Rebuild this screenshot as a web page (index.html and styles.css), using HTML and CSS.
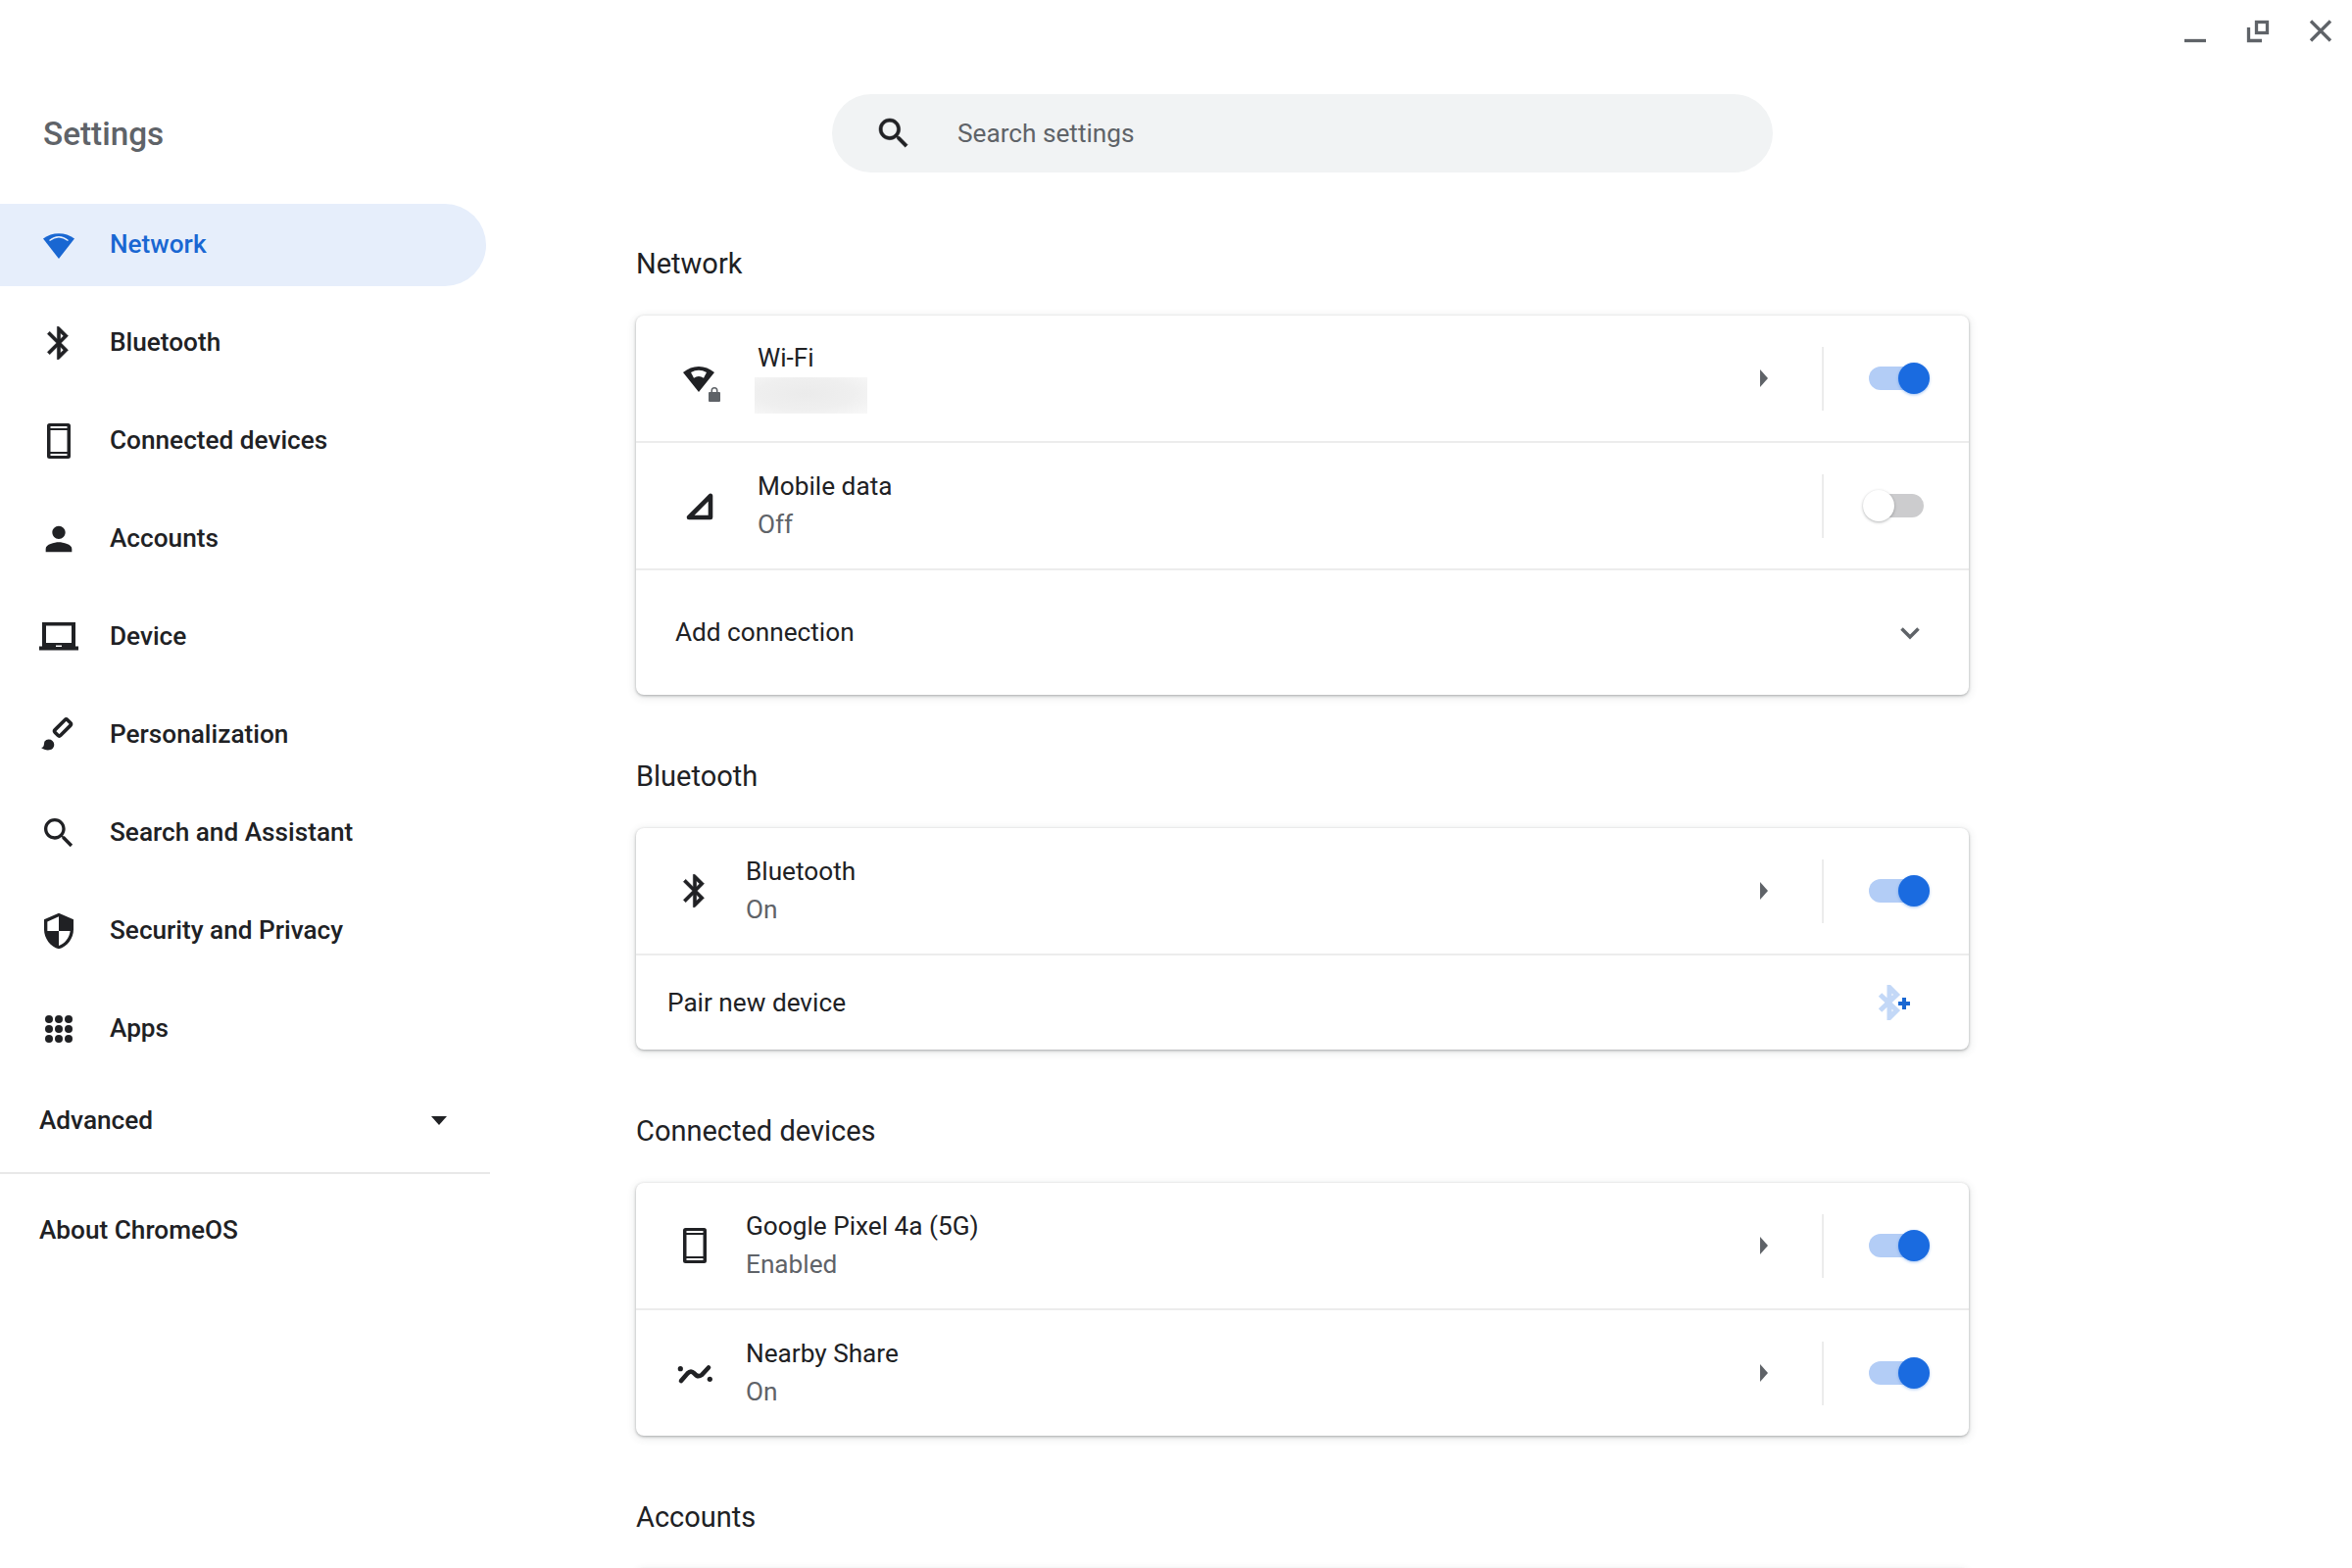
FILE: index.html
```html
<!DOCTYPE html>
<html lang="en">
<head>
<meta charset="utf-8">
<title>Settings</title>
<link rel="stylesheet" href="styles.css">
</head>
<body>
<div class="window-controls">
  <svg class="win-icon" viewBox="0 0 30 30"><path d="M4 25.5H26"/></svg>
  <svg class="win-icon" viewBox="0 0 30 30"><rect x="13.5" y="6.5" width="11" height="11"/><path d="M5.5 12V25.5H19"/></svg>
  <svg class="win-icon" viewBox="0 0 30 30"><path d="M5 5.500L25 25.500M25 5.500L5 25.500"/></svg>
</div>
<div class="app">
  <aside class="sidebar">
    <h1 class="app-title">Settings</h1>
    <nav class="nav">
      <a class="nav-item nav-item--active">
        <svg class="icon" viewBox="0 0 40 40"><path d="M4 13.500C9 10 14 8.300 20 8.300S31 10 36 13.500L20 34Z"/><path class="wifi-gap" d="M10.500 15.500Q20 8 29.500 15.500"/></svg>
        <span>Network</span>
      </a>
      <a class="nav-item">
        <svg class="icon icon--bold" viewBox="0 0 24 24"><path d="M17.71 7.71L12 2h-1v7.59L6.41 5 5 6.41 10.59 12 5 17.59 6.41 19 11 14.41V22h1l5.71-5.71-4.3-4.29 4.3-4.29zM13 5.83l1.88 1.88L13 9.59V5.83zm1.88 10.46L13 18.17v-3.76l1.88 1.88z"/></svg>
        <span>Bluetooth</span>
      </a>
      <a class="nav-item">
        <svg class="icon" viewBox="0 0 40 40"><path fill-rule="evenodd" d="M10.500 2h19A2.500 2.500 0 0 1 32 4.500v31a2.500 2.500 0 0 1-2.500 2.500h-19A2.500 2.500 0 0 1 8 35.500v-31A2.500 2.500 0 0 1 10.500 2zM11.500 7h17v-2h-17zM11.500 33v2h17v-2zM11.500 9v22h17v-22z"/></svg>
        <span>Connected devices</span>
      </a>
      <a class="nav-item">
        <svg class="icon" viewBox="0 0 24 24"><path d="M12 12c2.210 0 4-1.790 4-4s-1.790-4-4-4-4 1.790-4 4 1.790 4 4 4zm0 2c-2.670 0-8 1.340-8 4v2h16v-2c0-2.660-5.330-4-8-4z"/></svg>
        <span>Accounts</span>
      </a>
      <a class="nav-item">
        <svg class="icon" viewBox="0 0 40 40"><path fill-rule="evenodd" d="M3 5H37V29.500H40V33.500H0V29.500H3ZM7 8.500V26H33V8.500ZM17 28.500V30H23V28.500Z"/></svg>
        <span>Device</span>
      </a>
      <a class="nav-item">
        <svg class="icon" viewBox="0 0 40 40"><rect class="brush-handle" x="-4" y="-9" width="8" height="18" rx="2" transform="translate(24 12.500) rotate(45)"/><path d="M2 33c3.500-.5 2.500-3.500 3.500-6.500a5.500 5.500 0 1 1 8 7.500c-3.500 2.500-8 1.500-11.500-1z"/></svg>
        <span>Personalization</span>
      </a>
      <a class="nav-item">
        <svg class="icon" viewBox="0 0 24 24"><path d="M15.500 14h-.790l-.280-.270C15.410 12.590 16 11.110 16 9.500 16 5.910 13.090 3 9.500 3S3 5.910 3 9.500 5.910 16 9.500 16c1.610 0 3.090-.590 4.230-1.570l.270.280v.790l5 4.990L20.490 19l-4.990-5zm-6 0C7.010 14 5 11.990 5 9.500S7.010 5 9.500 5 14 7.010 14 9.500 11.990 14 9.500 14z"/></svg>
        <span>Search and Assistant</span>
      </a>
      <a class="nav-item">
        <svg class="icon" viewBox="0 0 24 24"><path d="M12 1L3 5v6c0 5.550 3.840 10.740 9 12 5.160-1.260 9-6.450 9-12V5l-9-4zm0 10.990h7c-.530 4.120-3.280 7.790-7 8.940V12H5V6.300l7-3.110v8.800z"/></svg>
        <span>Security and Privacy</span>
      </a>
      <a class="nav-item">
        <svg class="icon" viewBox="0 0 40 40"><circle cx="10" cy="10" r="4"/><circle cx="20" cy="10" r="4"/><circle cx="30" cy="10" r="4"/><circle cx="10" cy="20" r="4"/><circle cx="20" cy="20" r="4"/><circle cx="30" cy="20" r="4"/><circle cx="10" cy="30" r="4"/><circle cx="20" cy="30" r="4"/><circle cx="30" cy="30" r="4"/></svg>
        <span>Apps</span>
      </a>
    </nav>
    <div class="advanced">
      <span>Advanced</span>
      <svg class="caret" viewBox="0 0 16 9"><path d="M0 0H16L8 9Z"/></svg>
    </div>
    <a class="about">About ChromeOS</a>
  </aside>

  <main class="main">
    <div class="search">
      <svg class="icon icon--bold" viewBox="0 0 24 24"><path d="M15.500 14h-.790l-.280-.270C15.410 12.590 16 11.110 16 9.500 16 5.910 13.090 3 9.500 3S3 5.910 3 9.500 5.910 16 9.500 16c1.610 0 3.090-.590 4.230-1.570l.270.280v.790l5 4.990L20.490 19l-4.990-5zm-6 0C7.010 14 5 11.990 5 9.500S7.010 5 9.500 5 14 7.010 14 9.500 11.990 14 9.500 14z"/></svg>
      <span>Search settings</span>
    </div>

    <section class="section">
      <h2 class="section-title">Network</h2>
      <div class="card">
        <div class="row row--tall row--network">
          <div class="row-icon">
            <svg class="icon" viewBox="0 0 40 40"><path fill-rule="evenodd" d="M4 14C9 10 14 8 20 8S31 10 36 14L20 34ZM12 14L15 19.700Q20 16.500 25 19.700L28 14Q20 9.500 12 14Z"/></svg>
            <svg class="lock" viewBox="0 0 12 15"><path fill-rule="evenodd" d="M2.500 5V3.500a3.500 3.500 0 0 1 7 0V5H11a1 1 0 0 1 1 1v8a1 1 0 0 1-1 1H1a1 1 0 0 1-1-1V6a1 1 0 0 1 1-1zM4 5h4V3.500a2 2 0 0 0-4 0z"/></svg>
          </div>
          <div class="row-text row-text--tight">
            <div class="row-label">Wi-Fi</div>
            <div class="redacted"></div>
          </div>
          <svg class="arrow" viewBox="0 0 8 18"><path d="M0 0L8 9L0 18Z"/></svg>
          <div class="vr"></div>
          <div class="toggle toggle--on"><span class="toggle-track"></span><span class="toggle-knob"></span></div>
        </div>
        <div class="row row--tall row--network">
          <div class="row-icon">
            <svg class="icon" viewBox="0 0 40 40"><path class="tri" d="M32 10V32H10Z"/></svg>
          </div>
          <div class="row-text">
            <div class="row-label">Mobile data</div>
            <div class="row-sub">Off</div>
          </div>
          <div class="vr"></div>
          <div class="toggle"><span class="toggle-track"></span><span class="toggle-knob"></span></div>
        </div>
        <div class="row row--add">
          <div class="row-label row-label--grow">Add connection</div>
          <svg class="chevron" viewBox="0 0 24 24"><path d="M3.500 7.500L12 16L20.500 7.500"/></svg>
        </div>
      </div>
    </section>

    <section class="section">
      <h2 class="section-title">Bluetooth</h2>
      <div class="card">
        <div class="row row--tall">
          <div class="row-icon">
            <svg class="icon icon--bold" viewBox="0 0 24 24"><path d="M17.710 7.710L12 2h-1v7.590L6.410 5 5 6.410 10.590 12 5 17.590 6.410 19 11 14.410V22h1l5.710-5.710-4.300-4.290 4.300-4.290zM13 5.830l1.880 1.880L13 9.590V5.830zm1.880 10.460L13 18.170v-3.760l1.880 1.880z"/></svg>
          </div>
          <div class="row-text">
            <div class="row-label">Bluetooth</div>
            <div class="row-sub">On</div>
          </div>
          <svg class="arrow" viewBox="0 0 8 18"><path d="M0 0L8 9L0 18Z"/></svg>
          <div class="vr"></div>
          <div class="toggle toggle--on"><span class="toggle-track"></span><span class="toggle-knob"></span></div>
        </div>
        <div class="row row--pair">
          <div class="row-label row-label--grow">Pair new device</div>
          <svg class="pair" viewBox="0 0 36 36"><path class="pair-bt" d="M3.500 10L20.500 26L13 33.500V2.500L20.500 10L3.500 26"/><path class="pair-plus" d="M26 13h4v4h4v4h-4v4h-4v-4h-4v-4h4z"/></svg>
        </div>
      </div>
    </section>

    <section class="section">
      <h2 class="section-title">Connected devices</h2>
      <div class="card">
        <div class="row row--tall">
          <div class="row-icon">
            <svg class="icon" viewBox="0 0 40 40"><path fill-rule="evenodd" d="M10.500 2h19A2.500 2.500 0 0 1 32 4.500v31a2.500 2.500 0 0 1-2.500 2.500h-19A2.500 2.500 0 0 1 8 35.500v-31A2.500 2.500 0 0 1 10.500 2zM11.500 7h17v-2h-17zM11.500 33v2h17v-2zM11.500 9v22h17v-22z"/></svg>
          </div>
          <div class="row-text">
            <div class="row-label">Google Pixel 4a (5G)</div>
            <div class="row-sub">Enabled</div>
          </div>
          <svg class="arrow" viewBox="0 0 8 18"><path d="M0 0L8 9L0 18Z"/></svg>
          <div class="vr"></div>
          <div class="toggle toggle--on"><span class="toggle-track"></span><span class="toggle-knob"></span></div>
        </div>
        <div class="row row--tall row--last">
          <div class="row-icon">
            <svg class="icon" viewBox="0 0 40 40"><circle cx="5.300" cy="15.700" r="2.600"/><circle cx="35.300" cy="26.300" r="2.600"/><path class="wave" d="M6 28L12.500 20.500Q16 17 19.500 20.500Q23 25 27 22L34 14.500"/></svg>
          </div>
          <div class="row-text">
            <div class="row-label">Nearby Share</div>
            <div class="row-sub">On</div>
          </div>
          <svg class="arrow" viewBox="0 0 8 18"><path d="M0 0L8 9L0 18Z"/></svg>
          <div class="vr"></div>
          <div class="toggle toggle--on"><span class="toggle-track"></span><span class="toggle-knob"></span></div>
        </div>
      </div>
    </section>

    <section class="section">
      <h2 class="section-title">Accounts</h2>
      <div class="card card--stub"></div>
    </section>
  </main>
</div>
</body>
</html>
```

FILE: styles.css
```css
* { box-sizing: border-box; }

html, body {
  margin: 0;
  height: 1600px;
  overflow: hidden;
  background: #fff;
}

body {
  font-family: Roboto, "Liberation Sans", sans-serif;
  color: #202124;
  position: relative;
}

svg { display: block; flex: none; }

.icon { width: 40px; height: 40px; fill: #202124; }
.icon--bold { stroke: #202124; stroke-width: .3; }

/* window controls */
.window-controls {
  position: absolute;
  top: 16px;
  right: 17px;
  display: flex;
  gap: 34px;
}

.win-icon {
  width: 30px;
  height: 30px;
  fill: none;
  stroke: #5f6368;
  stroke-width: 3.3;
}

.app { display: flex; height: 1600px; }

/* sidebar */
.sidebar { width: 500px; flex: none; }

.app-title {
  margin: 0;
  height: 208px;
  padding: 117px 0 0 44px;
  font-size: 33.300px;
  line-height: 40px;
  font-weight: 500;
  color: #5f6368;
}

.nav { display: flex; flex-direction: column; gap: 16px; }

.nav-item {
  display: flex;
  align-items: center;
  gap: 32px;
  width: 496px;
  height: 84px;
  padding-left: 40px;
  border-radius: 0 42px 42px 0;
  font-size: 26.200px;
  font-weight: 500;
}

.nav-item span { padding-bottom: 2px; }

.nav-item--active {
  background: #e6eefb;
  color: #1967d2;
}

.nav-item--active .icon { fill: #1967d2; }

.wifi-gap { fill: none; stroke: #e6eefb; stroke-width: 1.4; }

.brush-handle { fill: none; stroke: #202124; stroke-width: 3.6; }

.advanced {
  display: flex;
  align-items: center;
  justify-content: space-between;
  height: 98px;
  margin-top: 8px;
  padding: 0 44px 10px 40px;
  border-bottom: 2px solid #e8e8e8;
  font-size: 26.200px;
  font-weight: 500;
}

.caret { width: 16px; height: 9px; fill: #202124; }

.about {
  display: block;
  padding: 39px 0 0 40px;
  font-size: 26.200px;
  line-height: 36px;
  font-weight: 500;
}

/* main */
.main {
  width: 1360px;
  margin-left: 149px;
  flex: none;
  padding-top: 96px;
}

.search {
  display: flex;
  align-items: center;
  gap: 45px;
  width: 960px;
  height: 80px;
  margin: 0 auto;
  padding-left: 43px;
  border-radius: 40px;
  background: #f1f3f4;
  color: #5f6368;
  font-size: 26.200px;
}

.section { margin-top: 63px; }
.search + .section { margin-top: 73px; }

.section-title {
  margin: 0 0 33px;
  font-size: 29px;
  line-height: 40px;
  font-weight: 400;
}

.card {
  background: #fff;
  border-radius: 8px;
  box-shadow: 0 1px 3px rgba(60, 64, 67, .4), 0 2px 8px 1px rgba(60, 64, 67, .12);
}

.card--stub { height: 60px; }

.row {
  display: flex;
  align-items: center;
  padding-right: 40px;
  border-bottom: 2px solid #ececec;
}

.row:last-child { border-bottom: 0; }

.row--tall { height: 130px; padding-left: 40px; }
.row--last { height: 128px; }
.row--network { padding-left: 44px; }
.row--add { height: 127px; padding-left: 40px; padding-right: 48px; }
.row--pair { height: 96px; padding-left: 32px; padding-right: 58px; }

.row-icon { position: relative; margin-right: 32px; }
.row--network .row-icon { margin-right: 40px; }

.lock {
  position: absolute;
  left: 30px;
  top: 29px;
  width: 12px;
  height: 15px;
  fill: #5f6368;
}

.row-text {
  flex: 1;
  display: flex;
  flex-direction: column;
  gap: 5px;
  padding-bottom: 2px;
}

.row-text--tight { gap: 3px; }

.row-label {
  font-size: 26.200px;
  line-height: 34px;
}

.row-label--grow { flex: 1; padding-bottom: 1px; }

.row-sub {
  font-size: 26.200px;
  line-height: 34px;
  color: #5f6368;
}

.redacted {
  width: 115px;
  height: 37px;
  margin-left: -3px;
  background: radial-gradient(ellipse at 45% 45%, #ebebeb 0%, #efefef 55%, #f8f8f8 100%);
}

.arrow { width: 8px; height: 18px; margin-right: 55px; fill: #5f6368; }

.vr { width: 2px; height: 65px; margin-right: 40px; background: #ececec; }

.toggle { position: relative; width: 68px; height: 32px; flex: none; }

.toggle-track {
  position: absolute;
  top: 4px;
  left: 6px;
  right: 6px;
  bottom: 4px;
  border-radius: 12px;
  background: #ccccce;
}

.toggle-knob {
  position: absolute;
  top: 0;
  left: 0;
  width: 32px;
  height: 32px;
  border-radius: 50%;
  background: #fff;
  box-shadow: 0 1px 3px rgba(60, 64, 67, .4);
}

.toggle--on .toggle-track { background: #b3cdf6; }

.toggle--on .toggle-knob {
  left: auto;
  right: 0;
  background: #1a6be0;
  box-shadow: 0 1px 3px rgba(26, 107, 224, .4);
}

.chevron {
  width: 24px;
  height: 24px;
  fill: none;
  stroke: #5f6368;
  stroke-width: 3.5;
}

.tri {
  fill: none;
  stroke: #202124;
  stroke-width: 4.6;
  stroke-linejoin: round;
}

.wave {
  fill: none;
  stroke: #202124;
  stroke-width: 4.6;
  stroke-linecap: round;
}

.pair { width: 36px; height: 36px; }
.pair-bt { fill: none; stroke: #c3d8f7; stroke-width: 5; }
.pair-plus { fill: #1967d2; }
```
